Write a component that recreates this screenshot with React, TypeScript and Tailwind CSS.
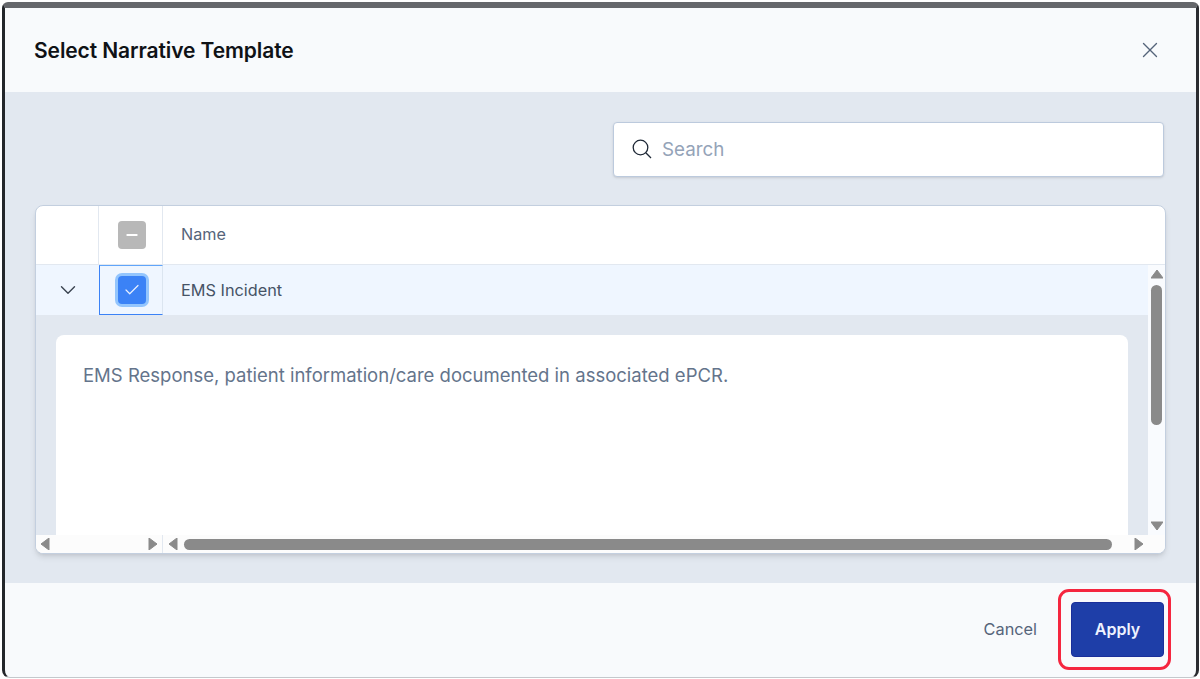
import { Check, ChevronDown, Minus, X } from 'lucide-react'

function Triangle({ dir, className = '' }: { dir: 'up' | 'down' | 'left' | 'right'; className?: string }) {
  const points = {
    up: '0,9 6,1 12,9',
    down: '0,1 12,1 6,9',
    left: '9,0 9,12 1,6',
    right: '1,0 1,12 9,6',
  }[dir]
  const vertical = dir === 'up' || dir === 'down'
  return (
    <svg
      viewBox={vertical ? '0 0 12 10' : '0 0 10 12'}
      className={`${vertical ? 'h-[10px] w-3' : 'h-3 w-[10px]'} shrink-0 fill-[#8a8a8a] ${className}`}
    >
      <polygon points={points} stroke="#8a8a8a" strokeLinejoin="round" strokeWidth="1" />
    </svg>
  )
}

export default function App() {
  return (
    <div className="h-[679px] w-[1200px] overflow-hidden bg-white pb-[1px] pl-[2px] pr-px pt-[2px] font-['Inter',sans-serif]">
      <div className="h-full rounded-b-[8px] rounded-t-[6px] border-b border-l-[3px] border-r-[3px] border-t-[6px] border-b-[#c4c8cc] border-l-[#23262a] border-r-[#2a2c30] border-t-[#65676b] bg-[#f8fafc]">
        <div className="flex h-full flex-col overflow-hidden rounded-[8px]">
          <header className="flex h-[84px] shrink-0 items-center justify-between pl-[29px] pr-[33px]">
            <h1 className="text-[21px] font-semibold leading-none tracking-[-0.1px] text-[#0f1216]">
              Select Narrative Template
            </h1>
            <X className="h-[26px] w-[26px] text-[#55647a]" strokeWidth={1.25} />
          </header>

          <main className="flex h-[491px] shrink-0 flex-col bg-[#e2e8f0] pl-[30px] pr-[30px] pt-[30px]">
            <div className="flex justify-end pr-[2px]">
              <div className="flex h-[55px] w-[551px] items-center rounded-[4px] border border-[#bccadd] bg-white pl-[18px] shadow-sm">
                <svg viewBox="0 0 20 20" className="mb-[2px] h-[20px] w-[20px] fill-none stroke-[#1f2937]">
                  <circle cx="8.5" cy="8.5" r="7.3" strokeWidth="1.3" />
                  <line x1="13.8" y1="13.8" x2="19" y2="19" strokeWidth="1.3" />
                </svg>
                <span className="ml-[10px] pt-[2px] text-[18.8px] text-[#94a3b8]">Search</span>
              </div>
            </div>

            <div className="mt-[28px] flex h-[349px] w-[1131px] flex-col overflow-hidden rounded-[8px] border border-[#c3cfdf] bg-white shadow-md">
              <div className="flex h-[59px] shrink-0 border-b border-[#e2e8f0]">
                <div className="w-[63px] border-r border-[#e2e8f0]" />
                <div className="flex w-[64px] items-center justify-center border-r border-[#e2e8f0] pl-[2px]">
                  <span className="flex h-[28px] w-[28px] items-center justify-center rounded-[4px] bg-[#b8b8b8]">
                    <Minus className="h-[16px] w-[16px] text-white" strokeWidth={3} />
                  </span>
                </div>
                <div className="flex items-center pb-[2px] pl-[18px] text-[16.2px] text-[#55647a]">Name</div>
              </div>

              <div className="flex min-h-0 flex-1">
                <div className="min-w-0 flex-1">
                  <div className="flex h-[50px] bg-[#eff6ff]">
                    <div className="flex w-[63px] items-center justify-center">
                      <ChevronDown className="h-[26px] w-[26px] text-[#3a4350]" strokeWidth={1.3} />
                    </div>
                    <div className="flex w-[64px] items-center justify-center border border-[#3b82f6] border-r-[#dbe5f0] border-t-[#60a5fa] pl-px">
                      <span className="flex h-[28px] w-[28px] items-center justify-center rounded-[4px] bg-[#3b82f6] ring-[3px] ring-[#93c5fd]">
                        <Check className="h-[18px] w-[18px] text-[#e8f0ff]" strokeWidth={1.6} />
                      </span>
                    </div>
                    <div className="flex items-center pl-[18px] pt-[1px] text-[16.3px] text-[#465366]">EMS Incident</div>
                  </div>
                  <div className="h-[220px] overflow-hidden bg-[#e2e8f0] pl-[20px] pr-[20px] pt-[20px]">
                    <div className="h-[240px] rounded-[8px] bg-white pl-[27px] pt-[27px] text-[18.5px] leading-[26px] text-[#64748b]">
                      EMS Response, patient information/care documented in associated ePCR.
                    </div>
                  </div>
                </div>
                <div className="flex w-[17px] shrink-0 flex-col items-center bg-[#f9fbfe] pt-[4px]">
                  <Triangle dir="up" />
                  <div className="mt-[6px] h-[140px] w-[11px] rounded-full bg-[#8a8a8a]" />
                  <div className="flex-1" />
                  <Triangle dir="down" className="mb-[4px]" />
                </div>
              </div>

              <div className="flex h-[18px] shrink-0 items-center bg-[#fcfcfc]">
                <div className="flex h-full w-[127px] items-center justify-between border-r border-[#e2e8f0] pl-[4px] pr-[4px]">
                  <Triangle dir="left" />
                  <Triangle dir="right" />
                </div>
                <div className="flex flex-1 items-center pl-[5px] pr-[21px]">
                  <Triangle dir="left" />
                  <div className="ml-[6px] h-[11px] flex-1 rounded-full bg-[#8a8a8a]" />
                  <div className="w-[22px]" />
                  <Triangle dir="right" />
                </div>
              </div>
            </div>
          </main>

          <footer className="flex flex-1 items-center justify-end pb-[2px] pr-[25px]">
            <button className="mr-[21px] text-[16.3px] text-[#55647a]">Cancel</button>
            <div className="rounded-[11px] border-[3px] border-[#f5263f] pb-[10px] pl-[10px] pr-[4px] pt-[10px]">
              <button className="flex h-[55px] w-[93px] items-center justify-center rounded-[4px] border border-[#1a2f9a] bg-[#1e3ea8] text-[16px] font-semibold text-[#eef2ff]">
                Apply
              </button>
            </div>
          </footer>
        </div>
      </div>
    </div>
  )
}
